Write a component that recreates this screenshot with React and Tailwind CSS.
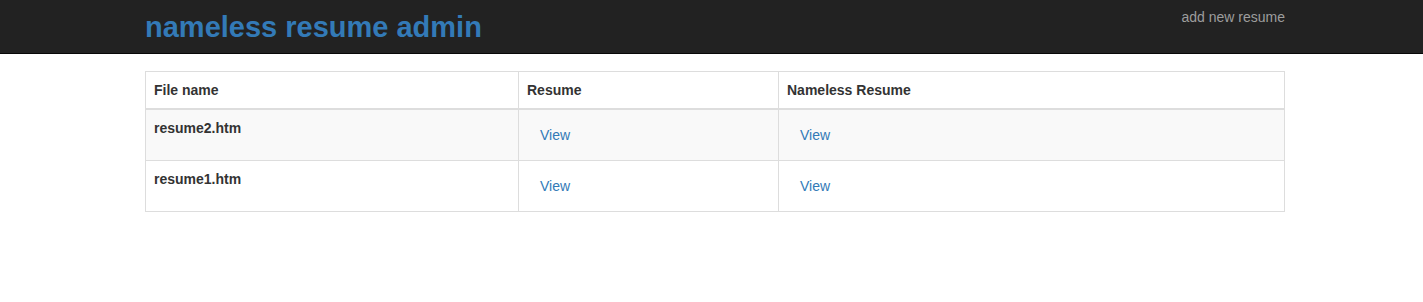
import React from "react";

const resumes = [
  { id: 2, fileName: "resume2.htm" },
  { id: 1, fileName: "resume1.htm" },
];

const App = () => {
  return (
    <div
      className="min-h-screen bg-white text-[14px] text-[#333]"
      style={{ fontFamily: '"Liberation Sans", Arial, Helvetica, sans-serif' }}
    >
      {/* Navbar */}
      <div className="h-[54px] bg-[#222] border-b border-[#080808]">
        <div className="w-[1140px] ml-[145px] flex justify-between items-start">
          <h1 className="pt-[9px] text-[29px] leading-[36px] font-bold text-[#337ab7]">
            nameless resume admin
          </h1>
          <a href="#" className="pt-[7px] leading-[20px] text-[#9d9d9d]">
            add new resume
          </a>
        </div>
      </div>

      {/* Main */}
      <div className="w-[1140px] ml-[145px] mt-[17px]">
        <table className="w-full border-collapse border border-[#ddd]">
          <thead>
            <tr>
              <th className="w-[373px] border border-[#ddd] border-b-2 p-2 text-left leading-[20px] font-bold">
                File name
              </th>
              <th className="w-[260px] border border-[#ddd] border-b-2 p-2 text-left leading-[20px] font-bold">
                Resume
              </th>
              <th className="border border-[#ddd] border-b-2 p-2 text-left leading-[20px] font-bold">
                Nameless Resume
              </th>
            </tr>
          </thead>
          <tbody>
            {resumes.map((resume, i) => (
              <tr key={resume.id} className={i % 2 === 0 ? "bg-[#f9f9f9]" : ""}>
                <td className="border border-[#ddd] p-2 align-top leading-[20px] font-bold">
                  {resume.fileName}
                </td>
                <td className="border border-[#ddd] p-2 align-top leading-[20px]">
                  <a href="#" className="inline-block px-3 py-[6px] border border-transparent text-[#337ab7]">
                    View
                  </a>
                </td>
                <td className="border border-[#ddd] p-2 align-top leading-[20px]">
                  <a href="#" className="inline-block px-3 py-[6px] border border-transparent text-[#337ab7]">
                    View
                  </a>
                </td>
              </tr>
            ))}
          </tbody>
        </table>
      </div>
    </div>
  );
};

export default App;
